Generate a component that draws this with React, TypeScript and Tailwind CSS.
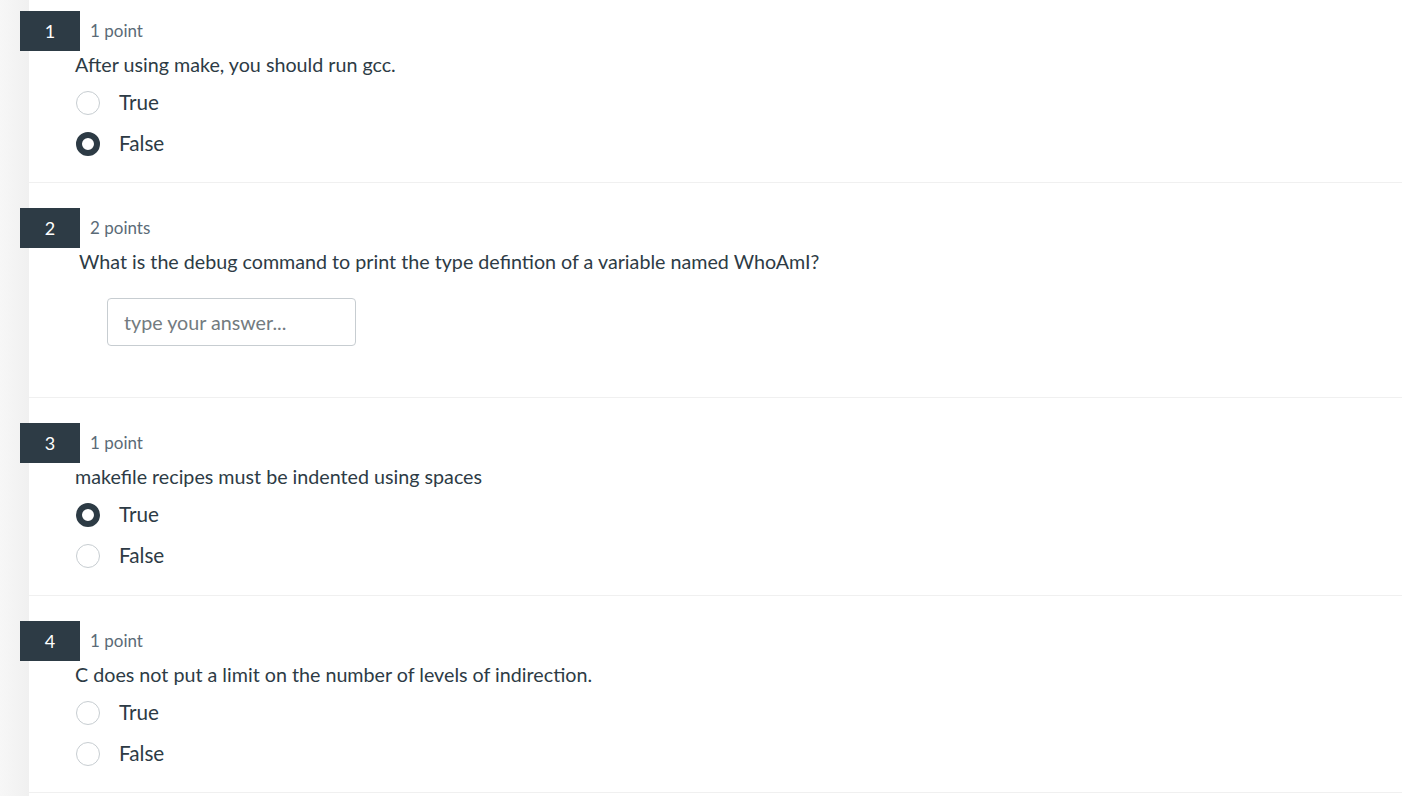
type Question = {
  num: number;
  points: string;
  text: string;
  kind: "tf" | "text";
  selected?: "True" | "False";
  indent?: boolean;
  pb?: string;
};

const questions: Question[] = [
  { num: 1, points: "1 point", text: "After using make, you should run gcc.", kind: "tf", selected: "False", pb: "pb-[18px]" },
  {
    num: 2,
    points: "2 points",
    text: "What is the debug command to print the type defintion of a variable named WhoAmI?",
    kind: "text",
    indent: true,
  },
  { num: 3, points: "1 point", text: "makefile recipes must be indented using spaces", kind: "tf", selected: "True", pb: "pb-[19px]" },
  { num: 4, points: "1 point", text: "C does not put a limit on the number of levels of indirection.", kind: "tf", pb: "pb-[18px]" },
];

function Radio({ label, checked }: { label: string; checked: boolean }) {
  return (
    <div className="flex items-center h-[41px]">
      {checked ? (
        <span className="w-6 h-6 rounded-full border-[6px] border-[#2d3b45] bg-white" />
      ) : (
        <span className="w-6 h-6 rounded-full border border-[#c7cdd1] bg-white" />
      )}
      <span className="ml-[19px] text-[20.7px] text-[#2d3b45]">{label}</span>
    </div>
  );
}

function QuestionBlock({ q, first }: { q: Question; first: boolean }) {
  return (
    <div className={`border-b border-[#f0f0f0] ${first ? "pt-[11px]" : "pt-[25px]"}`}>
      <div className="flex items-center -ml-[9px]">
        <div className="w-[60px] h-10 bg-[#2d3b45] text-white text-[18px] flex items-center justify-center">
          {q.num}
        </div>
        <span className="ml-[10px] text-[17px] text-[#5b6b77]">{q.points}</span>
      </div>
      <div className={`text-[19.7px] leading-[28px] text-[#2d3b45] ${q.indent ? "ml-[50px]" : "ml-[46px]"}`}>
        {q.text}
      </div>
      {q.kind === "tf" ? (
        <div className={`ml-[47px] mt-[3px] ${q.pb}`}>
          <Radio label="True" checked={q.selected === "True"} />
          <Radio label="False" checked={q.selected === "False"} />
        </div>
      ) : (
        <div className="ml-[78px] mt-[22px] pb-[51px]">
          <input
            className="w-[249px] h-12 border border-[#c7cdd1] rounded-[4px] px-4 text-[19.7px] text-[#2d3b45] placeholder:text-[#737b80] outline-none"
            placeholder="type your answer..."
          />
        </div>
      )}
    </div>
  );
}

export default function App() {
  return (
    <div className="flex min-h-screen bg-white" style={{ fontFamily: "Lato, 'Noto Sans', sans-serif" }}>
      <div className="w-[29px] shrink-0 bg-gradient-to-r from-[#f7f7f7] to-[#f0f0f0]" />
      <div className="flex-1">
        {questions.map((q, i) => (
          <QuestionBlock key={q.num} q={q} first={i === 0} />
        ))}
      </div>
    </div>
  );
}
